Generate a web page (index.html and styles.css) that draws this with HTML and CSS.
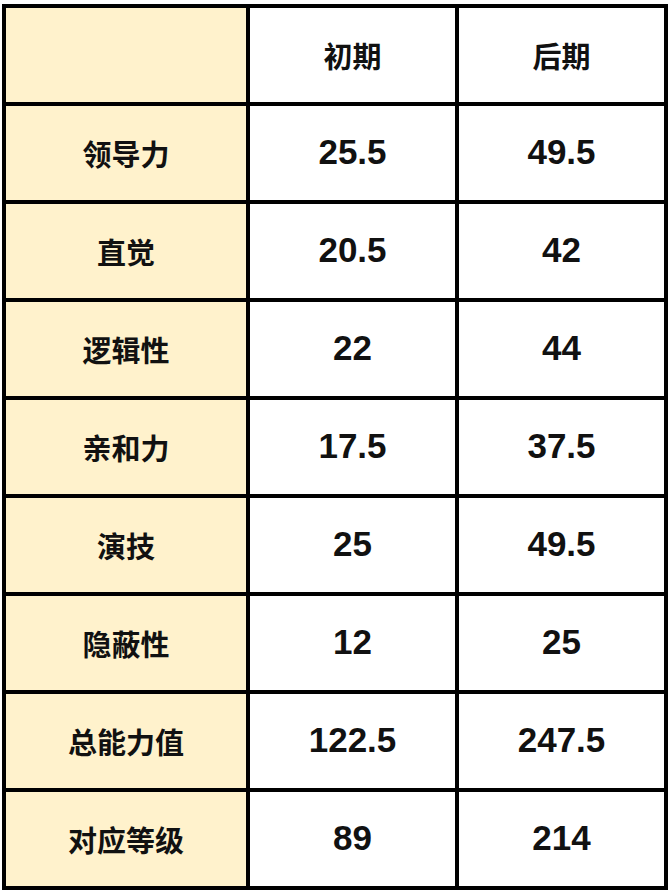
FILE: index.html
```html
<!DOCTYPE html>
<html lang="zh">
<head>
<meta charset="utf-8">
<link rel="stylesheet" href="styles.css">
</head>
<body>
<div class="table">
  <div class="cell label"></div>
  <div class="cell head">初期</div>
  <div class="cell head">后期</div>

  <div class="cell label">领导力</div>
  <div class="cell num">25.5</div>
  <div class="cell num">49.5</div>

  <div class="cell label">直觉</div>
  <div class="cell num">20.5</div>
  <div class="cell num">42</div>

  <div class="cell label">逻辑性</div>
  <div class="cell num">22</div>
  <div class="cell num">44</div>

  <div class="cell label">亲和力</div>
  <div class="cell num">17.5</div>
  <div class="cell num">37.5</div>

  <div class="cell label">演技</div>
  <div class="cell num">25</div>
  <div class="cell num">49.5</div>

  <div class="cell label">隐蔽性</div>
  <div class="cell num">12</div>
  <div class="cell num">25</div>

  <div class="cell label">总能力值</div>
  <div class="cell num">122.5</div>
  <div class="cell num">247.5</div>

  <div class="cell label">对应等级</div>
  <div class="cell num">89</div>
  <div class="cell num">214</div>
</div>
</body>
</html>
```

FILE: styles.css
```css
html, body {
  margin: 0;
  padding: 0;
  background: #ffffff;
}

.table {
  margin: 4px 0 0 2px;
  width: 666px;
  box-sizing: border-box;
  display: grid;
  grid-template-columns: 240px 205px 205px;
  grid-auto-rows: 94px;
  gap: 4px;
  padding: 4px;
  background: #000000;
}

.cell {
  display: flex;
  align-items: center;
  justify-content: center;
  background: #ffffff;
  color: #111111;
  font-weight: bold;
}

.label {
  background: #fff2cc;
  font-family: "Noto Sans CJK SC", "Noto Sans", sans-serif;
  font-size: 29px;
}

.head {
  font-family: "Noto Sans CJK SC", "Noto Sans", sans-serif;
  font-size: 29px;
}

.num {
  font-family: "Liberation Sans", Arial, sans-serif;
  font-size: 35px;
  padding-bottom: 2px;
}
```
